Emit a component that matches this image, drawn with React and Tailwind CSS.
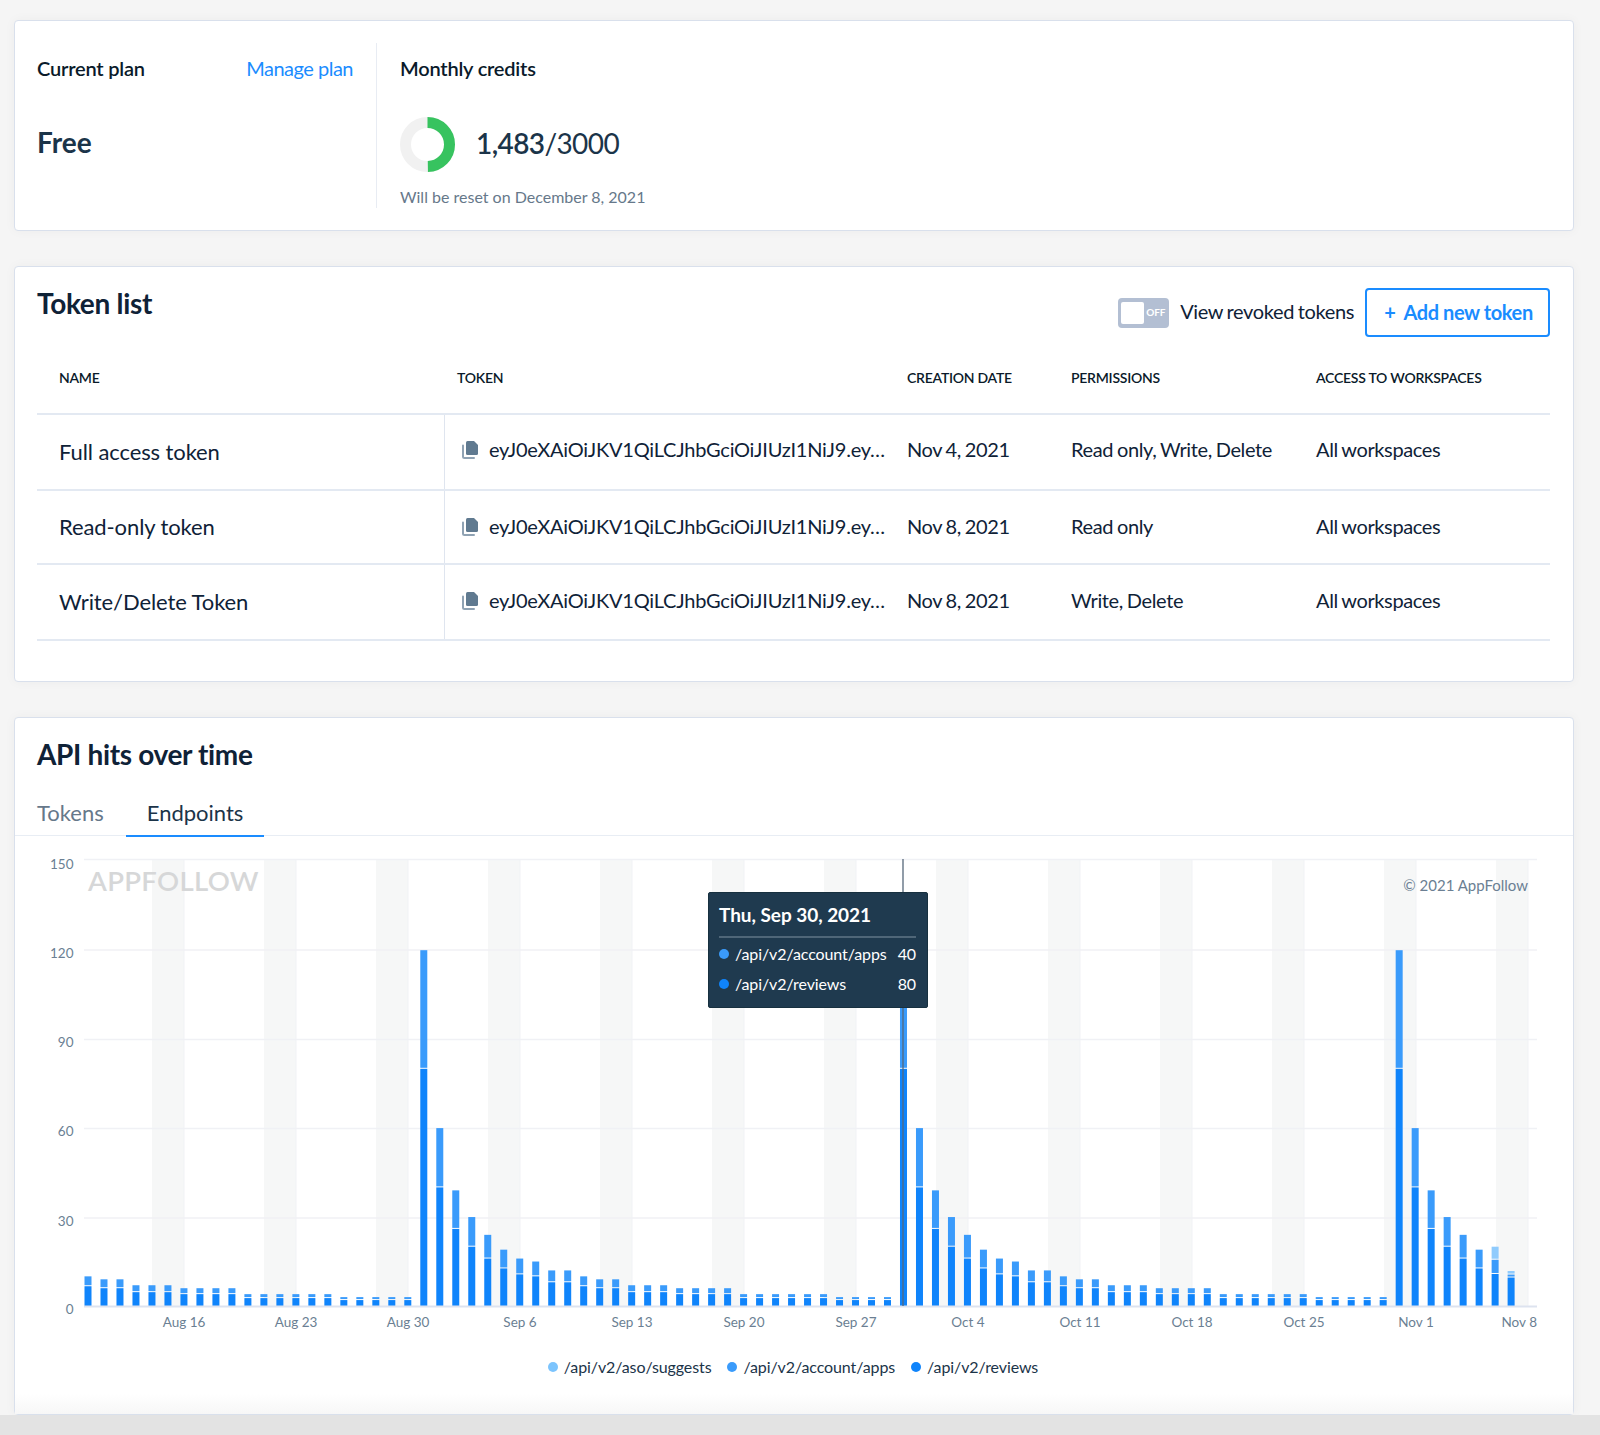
import React from "react";

const TOKEN = "eyJ0eXAiOiJKV1QiLCJhbGciOiJIUzI1NiJ9.ey…";
const rows = [
  { name: "Full access token", date: "Nov 4, 2021", perm: "Read only, Write, Delete", h: "h-[76px]", shift: "pb-[6px]" },
  { name: "Read-only token", date: "Nov 8, 2021", perm: "Read only", h: "h-[74px]", shift: "pb-[2px]" },
  { name: "Write/Delete Token", date: "Nov 8, 2021", perm: "Write, Delete", h: "h-[76px]", shift: "pb-[4px]" },
];

const DAY_X0 = 88;
const PITCH = 15.99;
const Y0 = 1306;
const UNIT = 2.965;
const CYCLE = { 1: 60, 2: 39, 3: 30, 4: 24, 5: 19, 6: 16, 7: 15, 8: 12, 9: 12, 10: 10, 11: 9, 12: 9, 13: 7, 14: 7, 15: 7, 16: 6, 17: 6, 18: 6, 19: 6, 20: 4, 21: 4, 22: 4, 23: 4, 24: 4, 25: 4, 26: 3, 27: 3, 28: 3, 29: 3, 30: 3 };
const SPIKES = [21, 51, 82];

function buildBars() {
  const bars = [];
  for (let i = 0; i <= 89; i++) {
    let total;
    if (SPIKES.includes(i)) total = 120;
    else if (i < 21) total = CYCLE[i + 10];
    else if (i < 51) total = CYCLE[i - 21];
    else if (i < 82) total = CYCLE[i - 51];
    else total = CYCLE[i - 82];
    let dark = total * (2 / 3);
    let mid = total - dark;
    let light = 0;
    if (i === 88) { dark = 10.8; mid = 4.8; light = 4.4; }
    if (i === 89) { dark = 9.6; mid = 1; light = 1.2; }
    bars.push({ x: DAY_X0 + i * PITCH, dark, mid, light });
  }
  return bars;
}

function Chart() {
  const bars = buildBars();
  const bands = Array.from({ length: 13 }, (_, i) => 152 + 112 * i);
  const grid = [
    { v: 150, y: 859.5, d: 9 },
    { v: 120, y: 950, d: 8 },
    { v: 90, y: 1039.5, d: 7 },
    { v: 60, y: 1128.5, d: 7 },
    { v: 30, y: 1218, d: 8 },
  ];
  const labels = ["Aug 16", "Aug 23", "Aug 30", "Sep 6", "Sep 13", "Sep 20", "Sep 27", "Oct 4", "Oct 11", "Oct 18", "Oct 25", "Nov 1"];
  return (
    <svg viewBox="15 836 1557 500" width="1557" height="500" className="block" style={{ fontFamily: "Lato, sans-serif" }}>
      {bands.map((x) => (
        <g key={x}>
          <rect x={x} y={859} width={32} height={447} fill="#f6f7f7" />
          <line x1={x + 32} x2={x + 32} y1={859} y2={1306} stroke="#f1f2f5" strokeWidth="1" />
        </g>
      ))}
      {grid.map((g) => (
        <g key={g.v}>
          <line x1={84} x2={1537} y1={g.y} y2={g.y} stroke="#f0f1f5" strokeWidth="1.5" />
          <text x={73.5} y={g.y + g.d} textAnchor="end" fontSize="13.5" fill="#6b7f93">{g.v}</text>
        </g>
      ))}
      <text x={73.5} y={1314} textAnchor="end" fontSize="13.5" fill="#6b7f93">0</text>
      <text x={88} y={891} fontSize="27.5" fontWeight="600" letterSpacing="0.3" fill="#d6d7d8">APPFOLLOW</text>
      <text x={1528} y={891} textAnchor="end" fontSize="15" fill="#6b7f93">© 2021 AppFollow</text>
      {bars.map((b, i) => {
        const dh = b.dark * UNIT;
        const mh = b.mid * UNIT;
        const lh = b.light * UNIT;
        const w = 7;
        const bx = b.x - 3.5;
        return (
          <g key={i}>
            <rect x={bx} y={Y0 - dh} width={w} height={dh} fill="#0f84fb" />
            <rect x={bx} y={Y0 - dh - mh} width={w} height={Math.max(mh - 1, 0.5)} fill="#3a9bfb" />
            {lh > 0 && <rect x={bx} y={Y0 - dh - mh - lh} width={w} height={Math.max(lh - 1, 0.5)} fill="#8fcbfd" />}
          </g>
        );
      })}
      <line x1={84} x2={1537} y1={1306.5} y2={1306.5} stroke="#dde3ef" strokeWidth="2" />
      <line x1={903} x2={903} y1={859} y2={1306} stroke="#56687a" strokeWidth="1.3" />
      {labels.map((l, i) => (
        <text key={l} x={184 + 112 * i} y={1326.5} textAnchor="middle" fontSize="13.5" fill="#6b7f93">{l}</text>
      ))}
      <text x={1537} y={1326.5} textAnchor="end" fontSize="13.5" fill="#6b7f93">Nov 8</text>
    </svg>
  );
}

function CopyIcon() {
  return (
    <svg width="18" height="19" viewBox="0 0 18 19" className="shrink-0">
      <path d="M5 2.5A1.5 1.5 0 0 1 6.5 1H13l4 4v8.5a1.5 1.5 0 0 1-1.5 1.5h-9A1.5 1.5 0 0 1 5 13.5z" fill="#607a90" />
      <path d="M2 5.5v11A1.5 1.5 0 0 0 3.5 18H13" fill="none" stroke="#8fa2b3" strokeWidth="2" strokeLinecap="round" />
    </svg>
  );
}

function Donut() {
  const r = 22;
  const c = 2 * Math.PI * r;
  return (
    <svg width="55" height="55" viewBox="0 0 55 55" className="shrink-0">
      <circle cx="27.5" cy="27.5" r={r} fill="none" stroke="#f1f1f1" strokeWidth="11" />
      <circle cx="27.5" cy="27.5" r={r} fill="none" stroke="#37c35f" strokeWidth="11" strokeDasharray={`${c * 0.494} ${c}`} transform="rotate(-90 27.5 27.5)" />
    </svg>
  );
}

const card = "bg-white border border-[#d9e0ec] rounded-[4px] shadow-[0_0_12px_rgba(0,0,0,0.04)]";
const body = "tracking-[-0.36px] [word-spacing:-1px]";

export default function App() {
  return (
    <div className="relative min-h-[1435px] w-[1600px] overflow-hidden bg-[#f5f5f5] pl-[14px] pr-[26px] pt-[20px] text-[#0f2237] [font-family:Lato,sans-serif]">
      <section className={`${card} flex h-[211px] py-[22px] pl-[22px]`}>
        <div className="flex w-[340px] flex-col border-r border-[#e8ecf3] pr-[23px]">
          <div className="flex h-[49px] items-center justify-between">
            <span className="text-[20px] font-semibold tracking-[-0.2px] text-[#0a1a2a]">Current plan</span>
            <a className="text-[20px] tracking-[-0.5px] text-[#1a8cff]">Manage plan</a>
          </div>
          <div className="mt-[25px] text-[28px] font-bold leading-[50px] text-[#1b3449]">Free</div>
        </div>
        <div className="flex flex-col pl-[23px]">
          <span className="flex h-[49px] items-center text-[20px] font-semibold tracking-[-0.2px] text-[#0a1a2a]">Monthly credits</span>
          <div className="mt-[25px] flex items-center gap-[21px]">
            <Donut />
            <span className="pb-[4px] text-[28px] leading-none tracking-[-0.6px] text-[#1b3449]"><span className="font-semibold">1,483</span>/3000</span>
          </div>
          <span className="mt-[15px] text-[16px] leading-[20px] text-[#66788a]">Will be reset on December 8, 2021</span>
        </div>
      </section>

      <section className={`${card} mt-[35px] h-[416px] pl-[22px] pr-[23px] pt-[21px]`}>
        <div className="flex items-start justify-between">
          <h2 className="-mt-[2px] text-[28px] font-bold leading-[34px] tracking-[-0.3px] text-[#0f2237]">Token list</h2>
          <div className="flex h-[49px] items-center">
            <div className="relative flex h-[30px] w-[51px] items-center rounded-[4px] bg-[#b3bfd3] pl-[3px]">
              <span className="h-[22px] w-[23px] rounded-[2px] bg-white" />
              <span className="ml-[2px] text-[10px] font-bold text-white">OFF</span>
            </div>
            <span className={`ml-[11px] pb-[3px] text-[20px] text-[#0f2237] ${body}`}>View revoked tokens</span>
            <button className="ml-[11px] flex h-[49px] w-[185px] items-center justify-center gap-[8px] rounded-[4px] border-2 border-[#1a8cff] pb-[2px] pl-[2px] text-[20px] font-bold tracking-[-0.4px] text-[#1a8cff]">
              <span>+</span>
              <span>Add new token</span>
            </button>
          </div>
        </div>

        <div className="grid h-[76px] grid-cols-[407px_463px_164px_245px_1fr] items-center pt-[5px] text-[14px] font-semibold uppercase tracking-[-0.25px] text-[#0a1a2a]">
          <div className="pl-[22px]">Name</div>
          <div className="pl-[13px]">Token</div>
          <div>Creation date</div>
          <div>Permissions</div>
          <div>Access to workspaces</div>
        </div>
        <div className="border-t-2 border-[#e3e9f2]">
          {rows.map((r) => (
            <div key={r.name} className={`grid ${r.h} grid-cols-[407px_463px_164px_245px_1fr] items-center border-b-2 border-[#e3e9f2] text-[20px] text-[#0f2237]`}>
              <div className="pb-[2px] pl-[22px] text-[22px] tracking-[-0.1px]">{r.name}</div>
              <div className={`flex h-full items-center gap-[10px] border-l border-[#dfe5ef] pl-[16px] ${r.shift}`}>
                <CopyIcon />
                <span className="whitespace-nowrap tracking-[-0.23px]">{TOKEN}</span>
              </div>
              <div className={`${r.shift} ${body}`}>{r.date}</div>
              <div className={`${r.shift} ${body}`}>{r.perm}</div>
              <div className={`${r.shift} ${body}`}>All workspaces</div>
            </div>
          ))}
        </div>
      </section>

      <section className={`${card} relative mt-[35px] h-[698px]`}>
        <h2 className="pl-[22px] pt-[18px] pb-[1px] text-[28px] font-bold leading-[36px] tracking-[-0.35px] text-[#0f2237]">API hits over time</h2>
        <div className="mt-[20px] flex h-[43px] items-start border-b border-[#e8edf4] pl-[22px]">
          <button className="h-[44px] border-b-2 border-transparent pb-[2px] text-[22px] leading-[36px] text-[#66788a]">Tokens</button>
          <button className="ml-[22px] h-[44px] border-b-2 border-[#1a8cff] px-[21px] pb-[2px] text-[22px] leading-[36px] text-[#1b3449]">Endpoints</button>
        </div>
        <Chart />
        <div className="absolute left-[693px] top-[174px] w-[220px] rounded-[2px] border border-[#17303f] bg-[#1f3a4f] pb-[8px] pl-[10px] pr-[11px] pt-[8px] text-white">
          <div className="border-b-2 border-[#4f6678] pb-[7px] text-[19px] font-bold leading-[28px] tracking-[-0.05px]">Thu, Sep 30, 2021</div>
          <div className="mt-[1px] flex h-[30px] items-center text-[16px] tracking-[-0.1px]">
            <span className="h-[10px] w-[10px] rounded-full bg-[#3a9bfb]" />
            <span className="ml-[6px] flex-1">/api/v2/account/apps</span>
            <span>40</span>
          </div>
          <div className="flex h-[30px] items-center text-[16px] tracking-[-0.1px]">
            <span className="h-[10px] w-[10px] rounded-full bg-[#0f84fb]" />
            <span className="ml-[6px] flex-1">/api/v2/reviews</span>
            <span>80</span>
          </div>
        </div>
        <div className="mt-[19px] flex items-center justify-center pr-[2px] text-[16px] tracking-[-0.1px] text-[#1b3449]">
          <span className="h-[10px] w-[10px] rounded-full bg-[#7cc4fd]" />
          <span className="ml-[6px]">/api/v2/aso/suggests</span>
          <span className="ml-[16px] h-[10px] w-[10px] rounded-full bg-[#3a9bfb]" />
          <span className="ml-[6px]">/api/v2/account/apps</span>
          <span className="ml-[16px] h-[10px] w-[10px] rounded-full bg-[#0f84fb]" />
          <span className="ml-[6px]">/api/v2/reviews</span>
        </div>
        <div className="absolute inset-x-0 bottom-0 h-[20px] bg-gradient-to-b from-white to-[#f7f7f7]" />
      </section>
      <div className="absolute inset-x-0 bottom-0 h-[20px] bg-[#e3e3e3]" />
    </div>
  );
}
